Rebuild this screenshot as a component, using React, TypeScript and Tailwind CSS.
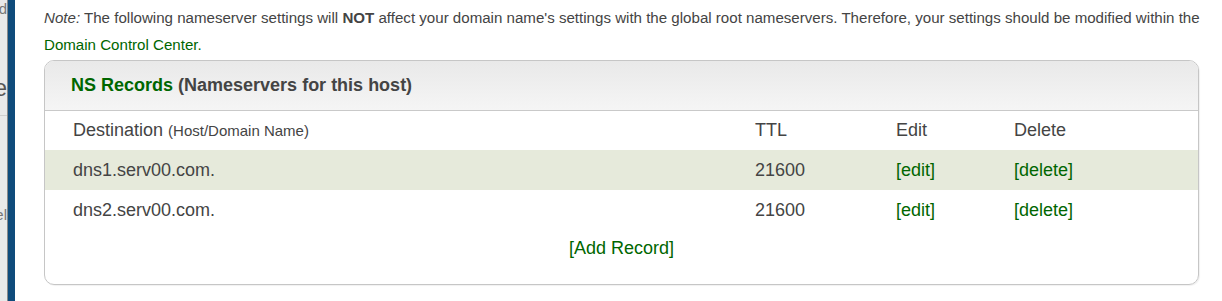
type NsRecord = {
  host: string;
  ttl: number;
};

const records: NsRecord[] = [
  { host: "dns1.serv00.com.", ttl: 21600 },
  { host: "dns2.serv00.com.", ttl: 21600 },
];

const cols = "grid grid-cols-[682px_141px_118px_1fr] items-center px-[28px]";

export default function App() {
  return (
    <div
      className="flex h-[301px] w-[1222px] overflow-hidden bg-white text-[#444]"
      style={{ fontFamily: '"Liberation Sans", Arial, sans-serif' }}
    >
      {/* clipped sidebar behind */}
      <div className="flex w-[8px] shrink-0 flex-col items-end overflow-hidden border-r border-[#8a8a8a] bg-[#e9e9e9] text-[#777]">
        <span className="mt-[1px] text-[15px] leading-[16px]">d</span>
        <span className="mt-[58px] text-[23px] leading-[26px] text-[#555]">e</span>
        <div className="mt-[14px] h-px w-full bg-[#cfcfcf]" />
        <span className="mt-[90px] text-[15px] leading-[18px]">el</span>
      </div>
      <div className="w-[7px] shrink-0 bg-[#0f4b7b]" />

      <div className="pl-[29px] pt-[4px]">
        <p className="w-[1176px] text-[15.1px] leading-[27px]">
          <em>Note:</em> The following nameserver settings will <b>NOT</b> affect your domain
          name's settings with the global root nameservers. Therefore, your settings should be
          modified within the{" "}
          <a className="text-[#006600]" href="#">
            Domain Control Center.
          </a>
        </p>

        <div className="mt-[2px] w-[1155px] overflow-hidden rounded-[10px] border border-[#c6c6c6] shadow-[1px_1px_1px_rgba(0,0,0,0.06)]">
          <div className="flex h-[50px] items-center border-b border-[#c9c9c9] bg-gradient-to-b from-[#e9e9e9] to-[#f5f5f5] pl-[26px] text-[18px] font-bold">
            <span className="text-[#006600]">NS Records</span>
            <span className="ml-[5px]">(Nameservers for this host)</span>
          </div>

          <div className={`${cols} h-[39px] text-[18px]`}>
            <div>
              Destination <span className="text-[15px]">(Host/Domain Name)</span>
            </div>
            <div>TTL</div>
            <div>Edit</div>
            <div>Delete</div>
          </div>

          {records.map((r, i) => (
            <div
              key={r.host}
              className={`${cols} h-[40px] text-[18px] ${i % 2 === 0 ? "bg-[#e6eadb]" : "bg-white"}`}
            >
              <div>{r.host}</div>
              <div>{r.ttl}</div>
              <a className="text-[#006600]" href="#">
                [edit]
              </a>
              <a className="text-[#006600]" href="#">
                [delete]
              </a>
            </div>
          ))}

          <div className="flex h-[36px] items-center justify-center text-[18px]">
            <a className="text-[#006600]" href="#">
              [Add Record]
            </a>
          </div>
          <div className="h-[18px]" />
        </div>
      </div>
    </div>
  );
}
